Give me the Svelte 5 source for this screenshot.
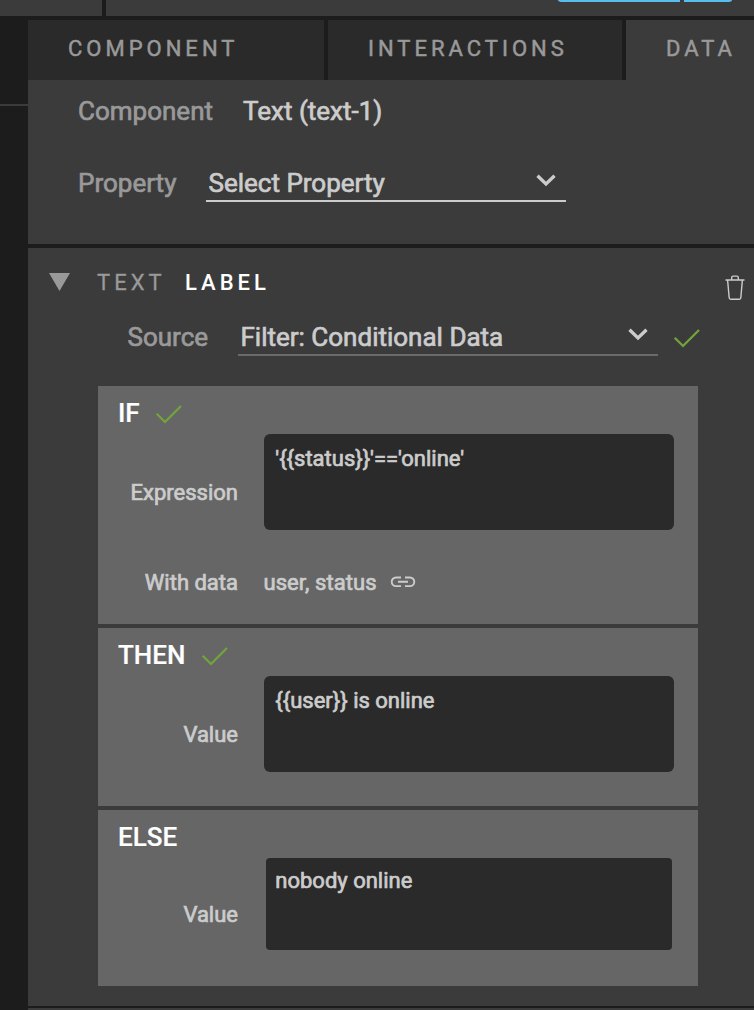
<script>
  const tabs = [
    { name: 'COMPONENT', active: false },
    { name: 'INTERACTIONS', active: false },
    { name: 'DATA', active: true }
  ];
  const thenText = '{{user}} is online';
  const ifText = "'{{status}}'=='online'";
</script>

{#snippet check()}
  <svg class="check" width="28" height="20" viewBox="0 0 28 20"><path d="M1.7 9.8 L10 18 L26 2" /></svg>
{/snippet}

{#snippet chevron()}
  <svg class="chevron" width="20" height="13" viewBox="0 0 20 13"><path d="M1.5 1.8 L10 10 L18.5 1.8" /></svg>
{/snippet}

<div class="app">
  <header class="topbar">
    <div class="corner"></div>
    <div class="toolbar"><span class="pill wide"></span><span class="pill small"></span></div>
  </header>
  <div class="body">
    <aside><div class="rule"></div></aside>
    <main>
      <nav>
        {#each tabs as tab}
          <div class="tab" class:active={tab.active}>{tab.name}</div>
        {/each}
      </nav>
      <section class="target">
        <div class="row component">
          <span class="muted">Component</span><span class="value">Text (text-1)</span>
        </div>
        <div class="row property">
          <span class="muted">Property</span>
          <div class="select"><span>Select Property</span>{@render chevron()}</div>
        </div>
      </section>
      <section class="binding">
        <div class="title">
          <svg class="arrow" width="21" height="18" viewBox="0 0 21 18"><path d="M0 0H21L10.5 18Z" /></svg>
          <span class="kind">TEXT</span><span class="name">LABEL</span>
          <svg class="trash" width="20" height="26" viewBox="0 0 20 26">
            <path d="M0.5 5H19.5M6.7 5V2.6Q6.7 1.1 8.2 1.1H11.8Q13.3 1.1 13.3 2.6V5M2.6 5L4.2 23Q4.4 24.2 5.6 24.2H14.4Q15.6 24.2 15.8 23L17.4 5" />
          </svg>
        </div>
        <div class="row source">
          <span class="muted">Source</span>
          <div class="select"><span>Filter: Conditional Data</span>{@render chevron()}</div>
          {@render check()}
        </div>
        <div class="blocks">
          <div class="block if">
            <div class="head"><span>IF</span>{@render check()}</div>
            <div class="field"><span class="label">Expression</span><div class="input">{ifText}</div></div>
            <div class="data">
              <span class="label">With data</span><span class="vars">user, status</span>
              <svg class="link" width="26" height="12" viewBox="0 0 26 12"><path d="M11 1.5H6A4.3 4.3 0 0 0 6 10.1H11M15 1.5H20A4.3 4.3 0 0 1 20 10.1H15M8 5.8H18" /></svg>
            </div>
          </div>
          <div class="block then">
            <div class="head"><span>THEN</span>{@render check()}</div>
            <div class="field"><span class="label">Value</span><div class="input">{thenText}</div></div>
          </div>
          <div class="block else">
            <div class="head"><span>ELSE</span></div>
            <div class="field"><span class="label">Value</span><div class="input">nobody online</div></div>
          </div>
        </div>
      </section>
      <div class="next"></div>
    </main>
  </div>
</div>

<style>
  :global(body) { background: #1c1c1c; overflow: hidden; }
  .app { height: 1010px; display: flex; flex-direction: column; gap: 4px; background: #1c1c1c; color: #ccc; font: 26px Roboto, sans-serif; -webkit-text-stroke: 0.7px currentColor; overflow: hidden; white-space: nowrap; }
  svg { flex: none; display: block; }
  .topbar { height: 16px; display: flex; gap: 4px; }
  .corner { width: 102px; background: #3b3b3b; }
  .toolbar { flex: 1; background: #3b3b3b; display: flex; justify-content: flex-end; gap: 4px; padding-right: 22px; }
  .pill { height: 2px; background: #57bdec; }
  .wide { width: 122px; border-bottom-left-radius: 5px 2px; }
  .small { width: 48px; border-bottom-right-radius: 5px 2px; }
  .body { display: flex; height: 990px; }
  aside { width: 28px; padding-top: 84px; box-sizing: border-box; flex: none; }
  .rule { height: 2px; background: #3b3b3b; }
  main { flex: 1; min-width: 0; }
  nav { display: grid; grid-template-columns: 296px 294px 128px; gap: 4px; height: 60px; }
  .tab { background: #2a2a2a; color: #999; font-size: 22px; letter-spacing: 4px; line-height: 58px; padding-left: 40px; height: 60px; box-sizing: border-box; -webkit-text-stroke-width: 0.5px; }
  .tab.active { background: #3b3b3b; }
  .target { height: 164px; background: #3b3b3b; padding-left: 50px; box-sizing: border-box; }
  .row { display: flex; }
  .muted { color: #999; }
  .component { line-height: 62px; }
  .component .muted { width: 165px; }
  .property { margin-top: 24px; line-height: 34px; }
  .property .muted { width: 128px; }
  .select { display: flex; justify-content: space-between; border-bottom: 2px solid #ccc; padding: 0 10px 0 2.5px; box-sizing: border-box; height: 36px; }
  .property .select { width: 360px; }
  .chevron { fill: none; stroke: #ccc; stroke-width: 3.3; margin-top: 8px; }
  .check { fill: none; stroke: #73a33c; stroke-width: 2.3; }
  .binding { margin-top: 4px; height: 758px; background: #3b3b3b; padding-top: 20px; box-sizing: border-box; }
  .title { display: flex; height: 30px; line-height: 29px; font-size: 22px; letter-spacing: 4px; padding: 0 9px 0 21px; -webkit-text-stroke-width: 0.3px; }
  .arrow { fill: #999; margin-top: 5px; }
  .kind { color: #999; width: 88px; margin-left: 27px; }
  .name { color: #fff; flex: 1; font-weight: 500; -webkit-text-stroke-width: 0; }
  .trash { fill: none; stroke: #ccc; stroke-width: 1.4; margin-top: 7px; }
  .source { margin-top: 22px; line-height: 34px; padding-left: 99.5px; }
  .source .muted { width: 110.5px; }
  .source .select { width: 420px; border-color: #6a6a6a; }
  .source .check { margin: 8px 0 0 15px; }
  .blocks { margin: 30px 0 0 70px; width: 600px; display: grid; gap: 4px; }
  .block { background: #666; height: 178px; padding-top: 11px; box-sizing: border-box; }
  .if { height: 238px; }
  .then { height: 178px; }
  .else { height: 176px; }
  .head { display: flex; line-height: 32px; height: 32px; padding-left: 20px; color: #fff; font-weight: 500; -webkit-text-stroke-width: 0.2px; }
  .head .check { margin: 7px 0 0 15px; }
  .then .check { margin-left: 15.7px; }
  .field { display: flex; margin-top: 5px; font-size: 22px; line-height: 30px; }
  .label { width: 140px; text-align: right; }
  .field .label { padding-top: 44px; }
  .input { margin-left: 26px; width: 410px; height: 96px; border-radius: 6px; background: #2a2a2a; padding: 10px 0 0 11.3px; box-sizing: border-box; }
  .else .label { padding-top: 42px; }
  .else .input { margin-left: 28px; width: 406px; height: 92px; border-radius: 4px; padding: 8px 0 0 9.3px; }
  .data { display: flex; margin-top: 38px; font-size: 22px; line-height: 30px; }
  .vars { margin-left: 25.5px; letter-spacing: 0.07px; }
  .link { fill: none; stroke: #ccc; stroke-width: 1.9; margin: 8px 0 0 13.2px; }
  .next { margin-top: 2px; height: 2px; background: #3b3b3b; }
</style>
